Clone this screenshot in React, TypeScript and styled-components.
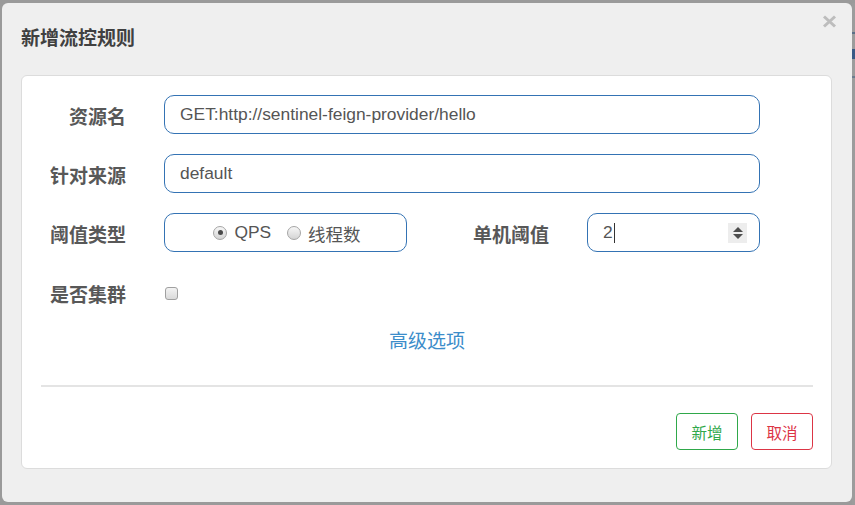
import React from "react";
import styled, { createGlobalStyle } from "styled-components";

const Global = createGlobalStyle`
  html, body { margin: 0; padding: 0; }
  body {
    background: #9a9a9a;
    width: 855px;
    height: 505px;
    overflow: hidden;
    font-family: "Liberation Sans", "Noto Sans CJK SC", Arial, sans-serif;
  }
`;

const Page = styled.div`
  display: flex;
  width: 855px;
  height: 505px;
`;

const LeftGap = styled.div`
  width: 2px;
  flex: none;
`;

const SideStrip = styled.div`
  width: 3px;
  flex: none;
  background:
    linear-gradient(#9a9a9a 0 3px, transparent 3px),
    linear-gradient(to bottom,
      transparent 0 32px, #5b7088 32px 34px, transparent 34px 49px,
      #3b5a86 49px 59px, transparent 59px 76px, #6c7c8e 76px 78px, transparent 78px);
  background-color: #9c9c9c;
`;

const Dialog = styled.div`
  margin-top: 3px;
  width: 850px;
  height: 499px;
  box-sizing: border-box;
  background: #efefef;
  border-radius: 6px;
  padding: 0 20px 33px 19px;
  display: flex;
  flex-direction: column;
`;

const Header = styled.div`
  height: 72px;
  display: flex;
  justify-content: space-between;
  align-items: flex-start;
  margin-right: -5px;
`;

const Title = styled.h4`
  margin: 0;
  align-self: center;
  font-family: "Noto Sans CJK SC", sans-serif;
  font-size: 19px;
  font-weight: 700;
  color: #404040;
  line-height: 1;
  margin-top: -6px;
`;

const CloseButton = styled.button`
  border: 0;
  background: transparent;
  padding: 0;
  margin-top: 12px;
  width: 15px;
  height: 13px;
  display: flex;
  cursor: pointer;
`;

const Card = styled.div`
  background: #fff;
  border: 1px solid #dcdcdc;
  border-radius: 6px;
  padding: 19px 18px 18px 19px;
  display: flex;
  flex-direction: column;
`;

const Form = styled.div`
  display: grid;
  grid-template-columns: 85px 243px 104px 173px;
  grid-template-rows: 39px 39px 39px 40px;
  column-gap: 38px;
  row-gap: 20px;
`;

const Label = styled.label`
  font-family: "Noto Sans CJK SC", sans-serif;
  font-size: 19px;
  font-weight: 700;
  color: #585858;
  text-align: right;
  white-space: nowrap;
  display: flex;
  align-items: center;
  justify-content: flex-end;
  padding-top: 2px;
`;

const Field = styled.div<{ $span?: number; $center?: boolean }>`
  grid-column: span ${(p) => p.$span ?? 1};
  box-sizing: border-box;
  height: 39px;
  border: 1px solid #3473b4;
  border-radius: 10px;
  padding: 0 12px 0 15px;
  display: flex;
  align-items: center;
  justify-content: ${(p) => (p.$center ? "center" : "flex-start")};
  font-size: 17.4px;
  color: #555;
  font-family: "Liberation Sans", "Noto Sans CJK SC", Arial, sans-serif;
`;

const Caret = styled.span`
  display: inline-block;
  width: 1px;
  height: 20px;
  background: #333;
  margin-left: 1px;
`;

const Spin = styled.span`
  margin-left: auto;
  width: 19px;
  height: 20px;
  background: #ededed;
  display: flex;
  flex-direction: column;
  align-items: center;
  justify-content: center;
  gap: 2px;
`;

const Tri = styled.span<{ $down?: boolean }>`
  width: 0;
  height: 0;
  border-left: 5px solid transparent;
  border-right: 5px solid transparent;
  ${(p) =>
    p.$down ? "border-top: 5px solid #4d4d4d;" : "border-bottom: 5px solid #4d4d4d;"}
`;

const RadioItem = styled.span<{ $gap?: number }>`
  display: inline-flex;
  align-items: center;
  gap: 7px;
  margin-right: ${(p) => p.$gap ?? 0}px;
`;

const RadioDot = styled.span<{ $checked?: boolean }>`
  width: 14px;
  height: 14px;
  box-sizing: border-box;
  border-radius: 50%;
  border: 1px solid #a5a5a5;
  background: linear-gradient(#f7f7f7, #d4d4d4);
  display: inline-flex;
  align-items: center;
  justify-content: center;
  &::after {
    content: "";
    width: 5px;
    height: 5px;
    border-radius: 50%;
    background: #4a4a4a;
    display: ${(p) => (p.$checked ? "block" : "none")};
  }
`;

const RadioText = styled.span<{ $cjk?: boolean }>`
  font-family: ${(p) => (p.$cjk ? '"Noto Sans CJK SC", sans-serif' : '"Liberation Sans", Arial, sans-serif')};
  font-size: ${(p) => (p.$cjk ? "17.5px" : "17.4px")};
  color: #555;
  line-height: 1;
  padding-top: ${(p) => (p.$cjk ? "2px" : "1px")};
`;

const CheckCell = styled.div`
  display: flex;
  align-items: center;
  padding-left: 1px;
`;

const CheckBox = styled.span`
  width: 13px;
  height: 13px;
  box-sizing: border-box;
  border: 1px solid #a0a0a0;
  border-radius: 3px;
  background: linear-gradient(#f3f3f3, #dadada);
  margin-top: 2px;
`;

const Advanced = styled.a`
  display: block;
  margin-top: 14px;
  text-align: center;
  line-height: 28px;
  height: 28px;
  font-family: "Noto Sans CJK SC", sans-serif;
  font-size: 19px;
  color: #3c8dca;
  text-decoration: none;
  cursor: pointer;
`;

const Divider = styled.hr`
  margin: 31px 0 0;
  border: 0;
  height: 2px;
  background: #e4e4e4;
`;

const Footer = styled.div`
  margin-top: 26px;
  display: flex;
  justify-content: flex-end;
  gap: 13px;
`;

const Btn = styled.button<{ $tone: "ok" | "cancel" }>`
  width: 62px;
  height: 37px;
  box-sizing: border-box;
  background: #fff;
  border-radius: 4px;
  border: 1px solid ${(p) => (p.$tone === "ok" ? "#2fa84a" : "#dc3545")};
  color: ${(p) => (p.$tone === "ok" ? "#2fa84a" : "#dc3545")};
  font-family: "Noto Sans CJK SC", sans-serif;
  font-size: 15.5px;
  padding: 0;
  cursor: pointer;
`;

export default function App() {
  return (
    <>
      <Global />
      <Page>
        <LeftGap />
        <Dialog>
          <Header>
            <Title>新增流控规则</Title>
            <CloseButton aria-label="close">
              <svg width="15" height="13" viewBox="0 0 15 13">
                <path d="M2 1.5 L13 11.5 M13 1.5 L2 11.5" stroke="#bdbdbd" strokeWidth="3" />
              </svg>
            </CloseButton>
          </Header>
          <Card>
            <Form>
              <Label>资源名</Label>
              <Field $span={3}>GET:http://sentinel-feign-provider/hello</Field>

              <Label>针对来源</Label>
              <Field $span={3}>default</Field>

              <Label>阈值类型</Label>
              <Field $center>
                <RadioItem $gap={16}>
                  <RadioDot $checked />
                  <RadioText>QPS</RadioText>
                </RadioItem>
                <RadioItem>
                  <RadioDot />
                  <RadioText $cjk>线程数</RadioText>
                </RadioItem>
              </Field>
              <Label>单机阈值</Label>
              <Field>
                2
                <Caret />
                <Spin>
                  <Tri />
                  <Tri $down />
                </Spin>
              </Field>

              <Label>是否集群</Label>
              <CheckCell>
                <CheckBox />
              </CheckCell>
            </Form>
            <Advanced>高级选项</Advanced>
            <Divider />
            <Footer>
              <Btn $tone="ok">新增</Btn>
              <Btn $tone="cancel">取消</Btn>
            </Footer>
          </Card>
        </Dialog>
        <SideStrip />
      </Page>
    </>
  );
}
